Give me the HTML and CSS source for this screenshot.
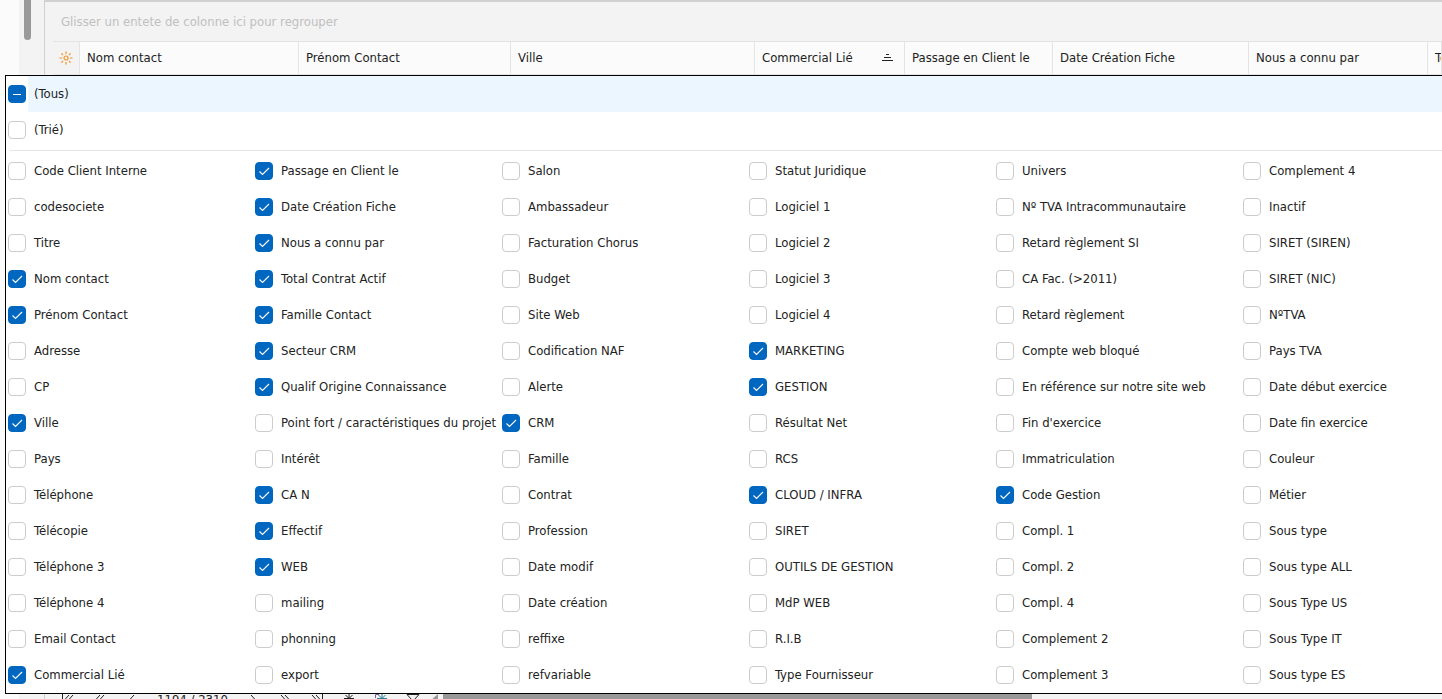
FILE: index.html
```
<!DOCTYPE html>
<html lang="fr">
<head>
  <meta charset="UTF-8" />
  <meta name="viewport" content="width=device-width, initial-scale=1.0"/>
  <title>Contacts</title>
  <link rel="stylesheet" href="styles.css">
</head>
<body>
  <div class="page">
    <div class="gutter"></div>
    <div class="side-scroll"><div class="side-thumb"></div></div>
    <main class="grid-panel">
      <div class="group-bar">Glisser un entete de colonne ici pour regrouper</div>
      <table class="grid-head">
        <thead>
          <tr>
            <th class="col-icon">
              <button type="button" class="icon-btn" aria-label="Choix des colonnes">
                <svg width="14" height="14" viewBox="0 0 14 14" fill="none" stroke="#f0932b" stroke-width="1.2">
                  <circle cx="7" cy="7" r="2"/>
                  <path d="M7 .5v2.5M7 11v2.5M.5 7H3M11 7h2.500M2.400 2.400l1.700 1.700M9.900 9.900l1.700 1.700M11.600 2.400L9.900 4.100M4.100 9.900l-1.700 1.700"/>
                </svg>
              </button>
            </th>
            <th class="col-nom">Nom contact</th>
            <th class="col-prenom">Prénom Contact</th>
            <th class="col-ville">Ville</th>
            <th class="col-commercial">
              <div class="sorted">Commercial Lié
                <svg width="11" height="8" viewBox="0 0 11 8" fill="#222"><path d="M4 0h3v1H4zM2 3h7v1H2zM0 6h11v1H0z"/></svg>
              </div>
            </th>
            <th class="col-passage">Passage en Client le</th>
            <th class="col-date">Date Création Fiche</th>
            <th class="col-connu">Nous a connu par</th>
            <th>Total Contrat Actif</th>
          </tr>
        </thead>
      </table>
      <div class="grid-body"></div>
      <div class="navigator">
        <div class="nav-buttons">
          <button type="button" class="nav-btn" aria-label="Premier"><svg width="14" height="12" viewBox="0 0 14 12"><path d="M1.500 0v12M8 1L3.500 6 8 11M12 1L7.500 6l4.500 5"/></svg></button>
          <button type="button" class="nav-btn" aria-label="Page précédente"><svg width="14" height="12" viewBox="0 0 14 12"><path d="M7 1L2.500 6 7 11M11 1L6.500 6l4.500 5"/></svg></button>
          <button type="button" class="nav-btn" aria-label="Précédent"><svg width="14" height="12" viewBox="0 0 14 12"><path d="M9 1L4.500 6 9 11"/></svg></button>
          <span class="nav-count">1194 / 2310</span>
          <button type="button" class="nav-btn" aria-label="Suivant"><svg width="14" height="12" viewBox="0 0 14 12"><path d="M5 1l4.500 5L5 11"/></svg></button>
          <button type="button" class="nav-btn" aria-label="Page suivante"><svg width="14" height="12" viewBox="0 0 14 12"><path d="M3 1l4.500 5L3 11M7 1l4.500 5L7 11"/></svg></button>
          <button type="button" class="nav-btn" aria-label="Dernier"><svg width="14" height="12" viewBox="0 0 14 12"><path d="M2 1l4.500 5L2 11M6 1l4.500 5L6 11M12.500 0v12"/></svg></button>
          <button type="button" class="nav-btn" aria-label="Signet"><svg width="14" height="12" viewBox="0 0 14 12"><path d="M7 0v10M2 4.500h10M3.500 1l7 7M10.500 1l-7 7"/></svg></button>
          <button type="button" class="nav-btn" aria-label="Aller au signet"><svg width="14" height="12" viewBox="0 0 14 12"><path stroke="#2f7f95" d="M8 0v10M3 4.500h10M4.500 1l7 7M11.500 1l-7 7"/><path stroke="#7a5fa8" d="M1.500 4V.5H5"/></svg></button>
          <button type="button" class="nav-btn" aria-label="Filtre"><svg width="14" height="12" viewBox="0 0 14 12"><path d="M1 .5h12L8 6v5H6V6z"/></svg></button>
        </div>
        <div class="h-scroll">
          <svg class="h-arrow" width="10" height="12" viewBox="0 0 10 12" fill="#999"><path d="M8 0v12L1 6z"/></svg>
          <div class="h-track"><div class="h-thumb"></div></div>
        </div>
      </div>
    </main>

    <form class="chooser">
      <label class="item all"><input type="checkbox" id="all"><span>(Tous)</span></label>
      <label class="item"><input type="checkbox"><span>(Trié)</span></label>
      <hr>
      <div class="columns">
        <label class="item"><input type="checkbox"><span>Code Client Interne</span></label>
        <label class="item"><input type="checkbox"><span>codesociete</span></label>
        <label class="item"><input type="checkbox"><span>Titre</span></label>
        <label class="item"><input type="checkbox" checked><span>Nom contact</span></label>
        <label class="item"><input type="checkbox" checked><span>Prénom Contact</span></label>
        <label class="item"><input type="checkbox"><span>Adresse</span></label>
        <label class="item"><input type="checkbox"><span>CP</span></label>
        <label class="item"><input type="checkbox" checked><span>Ville</span></label>
        <label class="item"><input type="checkbox"><span>Pays</span></label>
        <label class="item"><input type="checkbox"><span>Téléphone</span></label>
        <label class="item"><input type="checkbox"><span>Télécopie</span></label>
        <label class="item"><input type="checkbox"><span>Téléphone 3</span></label>
        <label class="item"><input type="checkbox"><span>Téléphone 4</span></label>
        <label class="item"><input type="checkbox"><span>Email Contact</span></label>
        <label class="item"><input type="checkbox" checked><span>Commercial Lié</span></label>

        <label class="item"><input type="checkbox" checked><span>Passage en Client le</span></label>
        <label class="item"><input type="checkbox" checked><span>Date Création Fiche</span></label>
        <label class="item"><input type="checkbox" checked><span>Nous a connu par</span></label>
        <label class="item"><input type="checkbox" checked><span>Total Contrat Actif</span></label>
        <label class="item"><input type="checkbox" checked><span>Famille Contact</span></label>
        <label class="item"><input type="checkbox" checked><span>Secteur CRM</span></label>
        <label class="item"><input type="checkbox" checked><span>Qualif Origine Connaissance</span></label>
        <label class="item"><input type="checkbox"><span>Point fort / caractéristiques du projet</span></label>
        <label class="item"><input type="checkbox"><span>Intérêt</span></label>
        <label class="item"><input type="checkbox" checked><span>CA N</span></label>
        <label class="item"><input type="checkbox" checked><span>Effectif</span></label>
        <label class="item"><input type="checkbox" checked><span>WEB</span></label>
        <label class="item"><input type="checkbox"><span>mailing</span></label>
        <label class="item"><input type="checkbox"><span>phonning</span></label>
        <label class="item"><input type="checkbox"><span>export</span></label>

        <label class="item"><input type="checkbox"><span>Salon</span></label>
        <label class="item"><input type="checkbox"><span>Ambassadeur</span></label>
        <label class="item"><input type="checkbox"><span>Facturation Chorus</span></label>
        <label class="item"><input type="checkbox"><span>Budget</span></label>
        <label class="item"><input type="checkbox"><span>Site Web</span></label>
        <label class="item"><input type="checkbox"><span>Codification NAF</span></label>
        <label class="item"><input type="checkbox"><span>Alerte</span></label>
        <label class="item"><input type="checkbox" checked><span>CRM</span></label>
        <label class="item"><input type="checkbox"><span>Famille</span></label>
        <label class="item"><input type="checkbox"><span>Contrat</span></label>
        <label class="item"><input type="checkbox"><span>Profession</span></label>
        <label class="item"><input type="checkbox"><span>Date modif</span></label>
        <label class="item"><input type="checkbox"><span>Date création</span></label>
        <label class="item"><input type="checkbox"><span>reffixe</span></label>
        <label class="item"><input type="checkbox"><span>refvariable</span></label>

        <label class="item"><input type="checkbox"><span>Statut Juridique</span></label>
        <label class="item"><input type="checkbox"><span>Logiciel 1</span></label>
        <label class="item"><input type="checkbox"><span>Logiciel 2</span></label>
        <label class="item"><input type="checkbox"><span>Logiciel 3</span></label>
        <label class="item"><input type="checkbox"><span>Logiciel 4</span></label>
        <label class="item"><input type="checkbox" checked><span>MARKETING</span></label>
        <label class="item"><input type="checkbox" checked><span>GESTION</span></label>
        <label class="item"><input type="checkbox"><span>Résultat Net</span></label>
        <label class="item"><input type="checkbox"><span>RCS</span></label>
        <label class="item"><input type="checkbox" checked><span>CLOUD / INFRA</span></label>
        <label class="item"><input type="checkbox"><span>SIRET</span></label>
        <label class="item"><input type="checkbox"><span>OUTILS DE GESTION</span></label>
        <label class="item"><input type="checkbox"><span>MdP WEB</span></label>
        <label class="item"><input type="checkbox"><span>R.I.B</span></label>
        <label class="item"><input type="checkbox"><span>Type Fournisseur</span></label>

        <label class="item"><input type="checkbox"><span>Univers</span></label>
        <label class="item"><input type="checkbox"><span>Nº TVA Intracommunautaire</span></label>
        <label class="item"><input type="checkbox"><span>Retard règlement SI</span></label>
        <label class="item"><input type="checkbox"><span>CA Fac. (&gt;2011)</span></label>
        <label class="item"><input type="checkbox"><span>Retard règlement</span></label>
        <label class="item"><input type="checkbox"><span>Compte web bloqué</span></label>
        <label class="item"><input type="checkbox"><span>En référence sur notre site web</span></label>
        <label class="item"><input type="checkbox"><span>Fin d'exercice</span></label>
        <label class="item"><input type="checkbox"><span>Immatriculation</span></label>
        <label class="item"><input type="checkbox" checked><span>Code Gestion</span></label>
        <label class="item"><input type="checkbox"><span>Compl. 1</span></label>
        <label class="item"><input type="checkbox"><span>Compl. 2</span></label>
        <label class="item"><input type="checkbox"><span>Compl. 4</span></label>
        <label class="item"><input type="checkbox"><span>Complement 2</span></label>
        <label class="item"><input type="checkbox"><span>Complement 3</span></label>

        <label class="item"><input type="checkbox"><span>Complement 4</span></label>
        <label class="item"><input type="checkbox"><span>Inactif</span></label>
        <label class="item"><input type="checkbox"><span>SIRET (SIREN)</span></label>
        <label class="item"><input type="checkbox"><span>SIRET (NIC)</span></label>
        <label class="item"><input type="checkbox"><span>NºTVA</span></label>
        <label class="item"><input type="checkbox"><span>Pays TVA</span></label>
        <label class="item"><input type="checkbox"><span>Date début exercice</span></label>
        <label class="item"><input type="checkbox"><span>Date fin exercice</span></label>
        <label class="item"><input type="checkbox"><span>Couleur</span></label>
        <label class="item"><input type="checkbox"><span>Métier</span></label>
        <label class="item"><input type="checkbox"><span>Sous type</span></label>
        <label class="item"><input type="checkbox"><span>Sous type ALL</span></label>
        <label class="item"><input type="checkbox"><span>Sous Type US</span></label>
        <label class="item"><input type="checkbox"><span>Sous Type IT</span></label>
        <label class="item"><input type="checkbox"><span>Sous type ES</span></label>
      </div>
    </form>
  </div>

  <script>
    document.getElementById('all').indeterminate = true;
  </script>
</body>
</html>
```
FILE: styles.css
```
* {
  box-sizing: border-box;
}

body {
  font-family: Tahoma, 'DejaVu Sans Condensed', 'DejaVu Sans', sans-serif;
  font-size: 13px;
  line-height: 16px;
  color: #222;
  background: #fbfbfb;
  margin: 0;
  overflow: hidden;
}

.page {
  position: relative;
  display: flex;
  height: 100vh;
  overflow: hidden;
}

.gutter {
  flex: 0 0 19px;
}

.side-scroll {
  flex: 0 0 25px;
  padding-left: 5px;
  background: #f3f3f3;
}

.side-thumb {
  width: 7px;
  height: 40px;
  background: #999;
  border-radius: 0 0 4px 4px;
}

/* grid behind the column chooser */
.grid-panel {
  flex: 1;
  min-width: 0;
  display: flex;
  flex-direction: column;
  padding-left: 8px;
  background: #f3f3f3;
  border-left: 1px solid #d0d0d0;
  border-top: 2px solid #d0d0d0;
}

.group-bar {
  flex: none;
  padding: 12px 8px 11px;
  color: #c0c0c0;
}

.grid-head {
  width: 100%;
  table-layout: fixed;
  border-collapse: separate;
  border-spacing: 0;
  border-top: 1px solid #e4e4e4;
  border-bottom: 1px solid #e4e4e4;
}

.grid-head th {
  height: 32px;
  padding: 0 7px;
  font-weight: normal;
  text-align: left;
  white-space: nowrap;
  overflow: hidden;
  background: #fbfbfb;
  border-right: 1px solid #e4e4e4;
}

.grid-head .col-icon {
  width: 27px;
  padding: 0 6px;
  background: #f3f3f3;
}

.col-nom { width: 219px; }
.col-prenom { width: 212px; }
.col-ville { width: 244px; }
.col-commercial { width: 150px; }
.col-passage { width: 148px; }
.col-date { width: 196px; }
.col-connu { width: 179px; }

.sorted {
  display: flex;
  justify-content: space-between;
  align-items: center;
  padding-right: 4px;
}

.icon-btn,
.nav-btn {
  display: flex;
  padding: 0;
  border: none;
  background: none;
}

.grid-body {
  flex: 0 0 612px;
  background: #fff;
}

.navigator {
  flex: none;
  display: flex;
  height: 26px;
}

.nav-buttons {
  display: flex;
  align-items: center;
  gap: 18px;
  padding: 0 10px 0 8px;
}

.nav-btn svg {
  fill: none;
  stroke: #222;
}

.h-scroll {
  flex: 1;
  display: flex;
  align-items: center;
}

.h-track {
  flex: 1;
  padding-left: 3px;
}

.h-thumb {
  width: 59%;
  height: 16px;
  background: #999;
}

/* column chooser popup */
.chooser {
  position: absolute;
  top: 75px;
  left: 5px;
  right: 0;
  overflow: hidden;
  background: #fff;
  border: 1px solid #000;
  border-right: none;
}

.chooser hr {
  margin: 2px 0 2px 4px;
  border: none;
  border-top: 1px solid #e4e4e4;
}

.columns {
  display: grid;
  grid-template-rows: repeat(15, 36px);
  grid-auto-flow: column;
  grid-auto-columns: 247px;
}

.item {
  display: flex;
  align-items: center;
  height: 36px;
  padding-left: 2px;
  white-space: nowrap;
}

.item span {
  flex: 1;
  line-height: 36px;
  padding-left: 6px;
}

.item.all span {
  background: #ebf6ff;
}

.item input {
  appearance: none;
  flex: none;
  width: 18px;
  height: 18px;
  margin: 0 2px 0 0;
  border: 1px solid #ccc;
  border-radius: 4px;
  background: #fff center / 16px 16px no-repeat;
}

.item input:checked,
.item input:indeterminate {
  border-color: #0067c0;
  background-color: #0067c0;
}

.item input:checked {
  background-image: url("data:image/svg+xml,%3Csvg xmlns='http://www.w3.org/2000/svg' viewBox='0 0 16 16' fill='none' stroke='white' stroke-width='1.1'%3E%3Cpath d='M3.500 8.500l3 3L13 5'/%3E%3C/svg%3E");
}

.item input:indeterminate {
  background-image: url("data:image/svg+xml,%3Csvg xmlns='http://www.w3.org/2000/svg' viewBox='0 0 16 16'%3E%3Cpath d='M4 8h8v1H4z' fill='white'/%3E%3C/svg%3E");
}
```
